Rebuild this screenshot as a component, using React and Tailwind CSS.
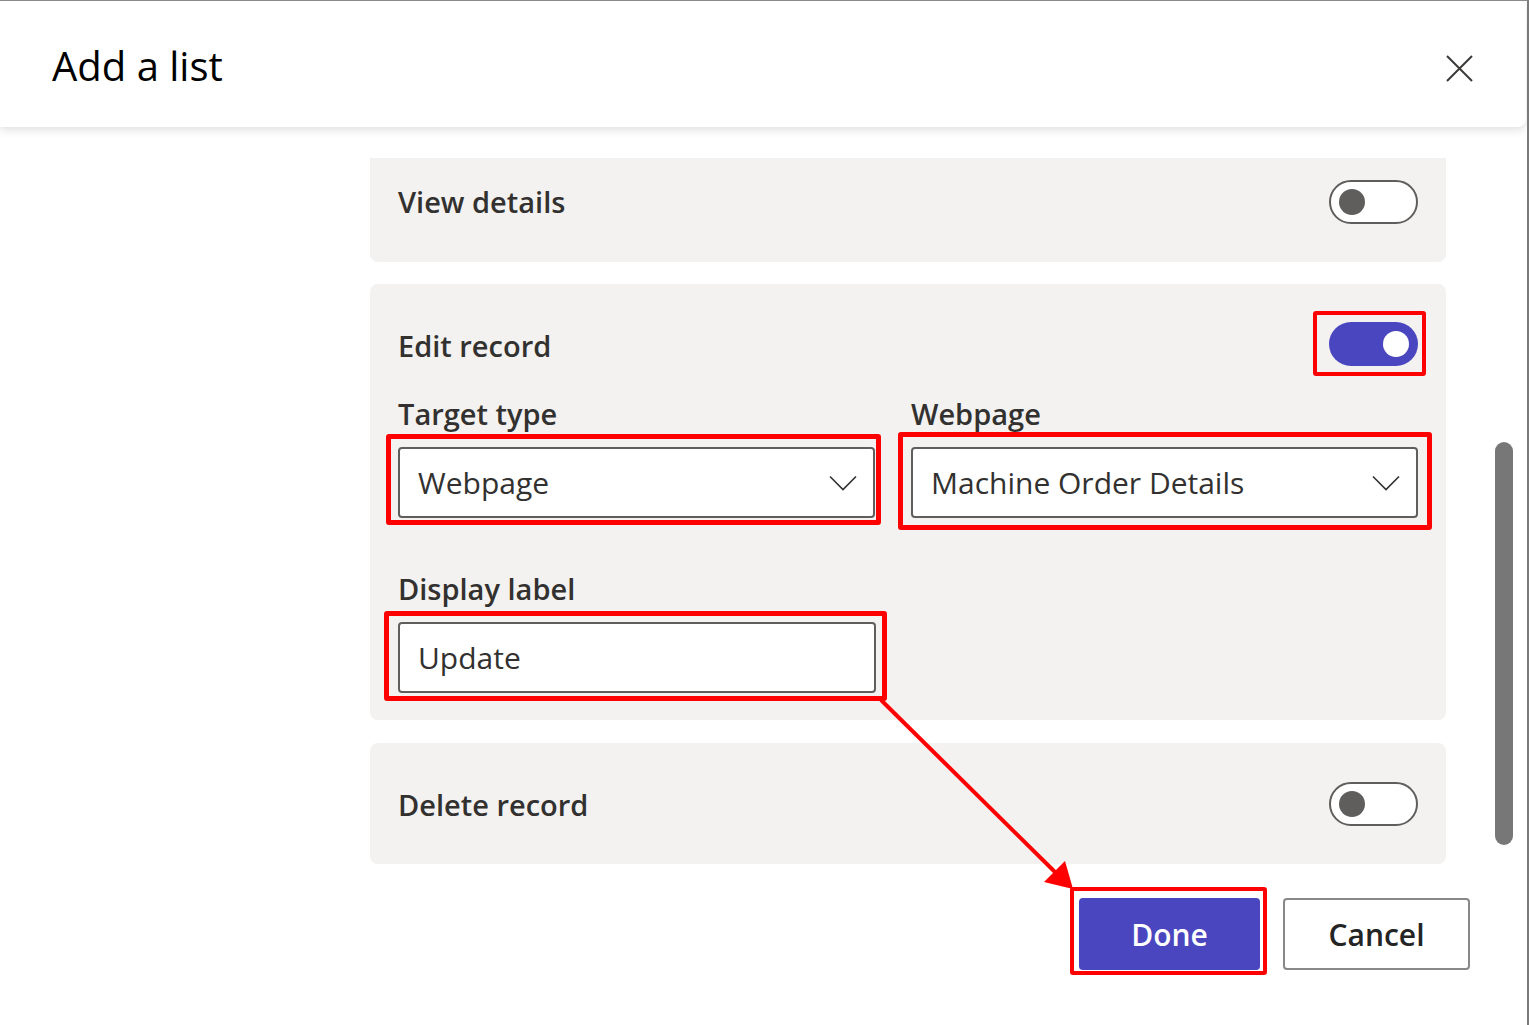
import React from 'react';

const Toggle = ({ on }) =>
  on ? (
    <div className="w-[89px] h-[44px] rounded-full bg-[#4a46bf] flex items-center justify-end pr-[9px]">
      <div className="w-[26px] h-[26px] rounded-full bg-white" />
    </div>
  ) : (
    <div className="w-[89px] h-[44px] rounded-full border-2 border-[#605e5c] bg-white flex items-center pl-[8px]">
      <div className="w-[26px] h-[26px] rounded-full bg-[#605e5c]" />
    </div>
  );

const Chevron = () => (
  <svg width="28" height="16" viewBox="0 0 28 16" fill="none">
    <path d="M1 1.5 L14 14.5 L27 1.5" stroke="#323130" strokeWidth="1.6" />
  </svg>
);

const Dropdown = ({ value }) => (
  <div className="h-[71px] border-2 border-[#605e5c] rounded-[4px] bg-white flex items-center justify-between pl-[18px] pr-[16px]">
    <span className="text-[30px] text-[#323130]">{value}</span>
    <Chevron />
  </div>
);

const Label = ({ children, className = '' }) => (
  <div className={`text-[29px] leading-[40px] font-semibold text-[#323130] ${className}`}>{children}</div>
);

export default function App() {
  return (
    <div className="relative w-[1529px] h-[1025px] bg-white border-t border-[#8a8a8a] border-r-2 border-r-[#7a7a7a] overflow-hidden font-['Open_Sans',sans-serif]">
      {/* header */}
      <header className="relative z-10 w-[1526px] h-[126px] bg-white rounded-r-lg shadow-[0_3px_10px_rgba(0,0,0,0.13)] flex items-center justify-between pl-[52px] pr-[53px]">
        <h1 className="mt-[3px] text-[40px] leading-none text-black">Add a list</h1>
        <svg className="mt-[8px]" width="27" height="27" viewBox="0 0 27 27" fill="none">
          <path d="M1 1 L26 26 M26 1 L1 26" stroke="#3b3a39" strokeWidth="2" />
        </svg>
      </header>

      <div className="flex">
        <div className="w-[1470px]">
          <div className="ml-[370px] w-[1076px] pt-[31px] flex flex-col">
            {/* View details */}
            <div className="h-[104px] bg-[#f3f2f1] rounded-b-lg px-[28px] pb-[16px] flex items-center justify-between">
              <Label>View details</Label>
              <Toggle />
            </div>

            {/* Edit record */}
            <div className="mt-[22px] bg-[#f3f2f1] rounded-lg px-[28px] pt-[38px] pb-[27px]">
              <div className="h-[44px] flex items-center justify-between">
                <Label className="mt-[4px]">Edit record</Label>
                <div className="relative">
                  <Toggle on />
                  <span className="absolute left-[-16px] right-[-8px] top-[-11px] bottom-[-10px] border-4 border-[#ff0000] rounded-[3px]" />
                </div>
              </div>

              <div className="mt-[28px] flex gap-[36px]">
                <div className="w-[477px]">
                  <Label>Target type</Label>
                  <div className="relative mt-[13px]">
                    <Dropdown value="Webpage" />
                    <span className="absolute left-[-12px] right-[-6px] top-[-13px] bottom-[-7px] border-[5px] border-[#ff0000] rounded-[3px]" />
                  </div>
                </div>
                <div className="flex-1">
                  <Label>Webpage</Label>
                  <div className="relative mt-[13px]">
                    <Dropdown value="Machine Order Details" />
                    <span className="absolute left-[-13px] right-[-14px] top-[-15px] bottom-[-12px] border-[5px] border-[#ff0000] rounded-[3px]" />
                  </div>
                </div>
              </div>

              <div className="mt-[51px] w-[478px]">
                <Label>Display label</Label>
                <div className="relative mt-[13px]">
                  <div className="h-[71px] border-2 border-[#605e5c] rounded-[4px] bg-white flex items-center pl-[18px]">
                    <span className="text-[30px] text-[#323130]">Update</span>
                  </div>
                  <span className="absolute left-[-14px] right-[-11px] top-[-11px] bottom-[-8px] border-[5px] border-[#ff0000] rounded-[3px]" />
                </div>
              </div>
            </div>

            {/* Delete record */}
            <div className="mt-[23px] h-[121px] bg-[#f3f2f1] rounded-lg px-[28px] flex items-center justify-between">
              <Label className="mt-[2px]">Delete record</Label>
              <Toggle />
            </div>
          </div>

          {/* footer */}
          <div className="mt-[34px] flex justify-end gap-[23px]">
            <div className="relative">
              <button className="w-[181px] h-[72px] rounded-[4px] bg-[#4a46bf] text-white text-[30px] font-semibold">
                Done
              </button>
              <span className="absolute left-[-9px] right-[-7px] top-[-11px] bottom-[-5px] border-4 border-[#ff0000] rounded-[3px]" />
            </div>
            <button className="w-[187px] h-[72px] rounded-[4px] border-2 border-[#8a8886] bg-white text-[#242424] text-[30px] font-semibold">
              Cancel
            </button>
          </div>
        </div>

        {/* scrollbar */}
        <div className="ml-[25px] mt-[315px] w-[18px] h-[403px] rounded-full bg-[#777777]" />
      </div>

      {/* annotation arrow */}
      <svg className="absolute left-0 top-0 pointer-events-none" width="1529" height="1025">
        <line x1="881" y1="699" x2="1058" y2="874" stroke="#ff0000" strokeWidth="4" />
        <polygon points="1073,888 1044,881 1065,860" fill="#ff0000" />
      </svg>
    </div>
  );
}
